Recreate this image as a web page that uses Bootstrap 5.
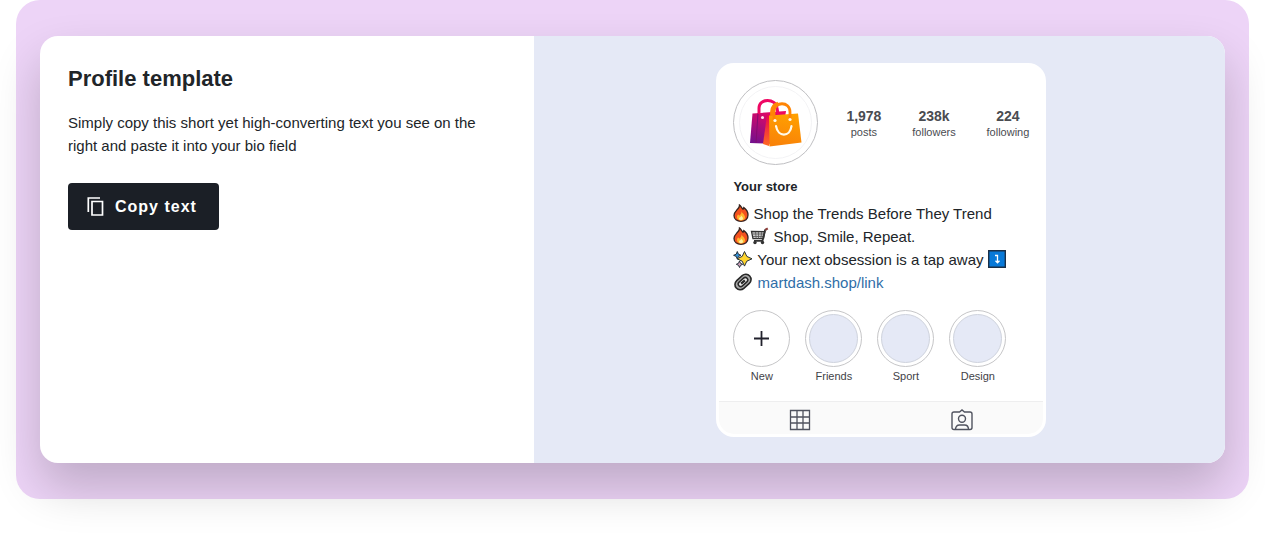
<!DOCTYPE html>
<html lang="en">
<head>
<meta charset="utf-8">
<meta name="viewport" content="width=device-width, initial-scale=1">
<title>Profile template</title>
<link href="https://cdn.jsdelivr.net/npm/bootstrap@5.3.0/dist/css/bootstrap.min.css" rel="stylesheet">
<style>
  body { font-family: "Liberation Sans", Arial, sans-serif; color: #212529; background: #fff; }
  .stage { background: #edd4f7; border-radius: 24px; padding: 36px 24px; }
  .panel { border-radius: 18px; background: #fff; box-shadow: 0 24px 48px rgba(0, 0, 0, .2); }
  .panel-left { padding: 29px 28px 28px; border-radius: 18px 0 0 18px; }
  .panel-right { background: #e5e9f6; padding: 27px 16px 26px 20px; border-radius: 0 18px 18px 0; }
  .panel-title { font-size: 22px; line-height: 28px; margin-bottom: 18px; }
  .copy-note, .bio { font-size: 15px; line-height: 23px; }
  .copy-note { margin-bottom: 26px; max-width: 424px; }
  .btn-copy { --bs-btn-color: #fff; --bs-btn-bg: #1b1f26; --bs-btn-hover-color: #fff; --bs-btn-hover-bg: #2b313b;
    --bs-btn-active-color: #fff; --bs-btn-active-bg: #101318; --bs-btn-border-width: 0; --bs-btn-border-radius: 4px;
    --bs-btn-font-weight: 700; --bs-btn-font-size: 16px; --bs-btn-line-height: 23px;
    --bs-btn-padding-x: 18px; --bs-btn-padding-y: 12px; letter-spacing: 1px; }
  .phone { width: 100%; max-width: 330px; border: 3px solid #fff; border-radius: 18px; background: #fff; overflow: hidden; }
  .phone-body { padding: 14px 14px 18px; }
  .avatar { width: 85px; height: 85px; border: 1px solid #bfbfc2; padding: 5px; flex: none; }
  .avatar-ring { border: 1px solid #f3f3f5; }
  .stats { margin-left: 28px; padding-top: 2px; color: #4a4c51; text-align: center; }
  .stat-value { font-size: 14px; line-height: 17px; }
  .stat-label { font-size: 11px; line-height: 15px; }
  .store-name { font-size: 13px; line-height: 18px; margin: 13px 0 6px; }
  .bio svg { vertical-align: -3px; }
  .bio a { color: #2f6ea8; }
  .highlights { gap: 15px; margin-top: 16px; }
  .highlight { width: 57px; font-size: 11px; line-height: 14px; color: #3f4247; text-align: center; }
  .bubble { width: 57px; height: 57px; border: 1px solid #c6c6c8; border-radius: 50%; padding: 3px; background: #fff; margin-bottom: 2px; }
  .bubble-fill { background: #e5e9f6; border: 1px solid #cfd3dd; }
  .tabs { background: #fafafa; border-top: 1px solid #eeeeef; border-radius: 0 0 14px 14px; }
  .tabs a { padding: 7px 0 3px; line-height: 0; color: #50535f; }
</style>
</head>
<body>
<svg class="d-none" aria-hidden="true">
  <symbol id="fire" viewBox="0 0 16 18">
    <path d="M6.500 1C8 2 8.500 4 10 5.200c.5-.4.7-1 .8-1.600C13.500 5.500 15 8 15 11c0 4-3 6.300-7 6.300S1 15 1 11.500C1 8.500 3 7 4.500 5.300 5.800 4 6.600 2.800 6.500 1z" fill="#f4511e" stroke="#35231f" stroke-width="1.300"/>
    <path d="M8.500 7c.3 2 3.500 3.500 3.500 6.300 0 2.200-1.700 3.200-4 3.200s-4-1.200-4-3.500c0-1.300.6-2.200 1.200-2.800.4.8.8 1.200 1.300 1.200C8 10.500 8.700 9 8.500 7z" fill="#ffb52e"/>
    <path d="M8.300 11.500c.2 1 1.700 1.500 1.700 3 0 1-.8 1.700-2 1.700s-2-.7-2-1.700c0-1 2.300-1.500 2.300-3z" fill="#fff0a0"/>
  </symbol>
</svg>
<main class="container-fluid px-3 min-vh-100">
  <section class="stage">
    <div class="panel row g-0">
      <div class="col-12 col-md-5 panel-left">
        <h1 class="panel-title fw-bold">Profile template</h1>
        <p class="copy-note">Simply copy this short yet high-converting text you see on the right and paste it into your bio field</p>
        <button type="button" class="btn btn-copy d-inline-flex align-items-center">
          <svg class="me-2" width="21" height="21" viewBox="0 0 21 21" fill="none" stroke="#fff" stroke-width="1.700" aria-hidden="true"><path d="M2.300 16V2H14M6 5.500h10.500v13.500H6z"/></svg>
          <span class="pe-1">Copy text</span>
        </button>
      </div>
      <div class="col-12 col-md-7 panel-right d-flex justify-content-center">
        <article class="phone">
          <div class="phone-body">
            <div class="d-flex align-items-center">
              <div class="avatar rounded-circle">
                <div class="avatar-ring rounded-circle w-100 h-100 d-flex align-items-center justify-content-center">
                  <svg width="52" height="48" viewBox="0 0 52 48" aria-label="Store logo">
                    <defs>
                      <linearGradient id="bagBack" x1=".7" y1="0" x2=".2" y2="1"><stop stop-color="#ed0860"/><stop offset="1" stop-color="#75108d"/></linearGradient>
                      <linearGradient id="bagFront" x1=".6" y1="0" x2=".4" y2="1"><stop stop-color="#ffa000"/><stop offset="1" stop-color="#f98208"/></linearGradient>
                      <linearGradient id="bagSide" x1="0" y1="0" x2="0" y2="1"><stop stop-color="#e80650"/><stop offset="1" stop-color="#ff6a22"/></linearGradient>
                    </defs>
                    <path d="M2.500 14.500 36 12l-5 33-31-1z" fill="url(#bagBack)"/>
                    <path d="m8 14-2 30" stroke="#830c70" stroke-width="1"/>
                    <path d="M9 15V9c0-10 17-10 18 0l1 6" fill="none" stroke="#ef0763" stroke-width="3"/>
                    <circle cx="12.500" cy="18.500" r="1.500" fill="#ffe1ec"/>
                    <path d="m17 16-4 29 6 2 8-30z" fill="url(#bagSide)"/>
                    <path d="m19 16.500 29-2 3.500 29-32 4z" fill="url(#bagFront)"/>
                    <path d="M24 21v-8c0-11 16-11 16 0v7M21.500 17v-4c0-6 3-8 6.500-9" fill="none" stroke="#ff8505" stroke-width="2.800"/>
                    <path d="M26 27c2 11.500 14 11.500 15.500 0" fill="none" stroke="#fff9e8" stroke-width="2.200" stroke-linecap="round"/>
                    <circle cx="25" cy="21.500" r="1.600" fill="#fff9e8"/><circle cx="40" cy="20.500" r="1.600" fill="#fff9e8"/>
                  </svg>
                </div>
              </div>
              <div class="stats d-flex justify-content-between flex-grow-1">
                <div><div class="stat-value fw-bold">1,978</div><div class="stat-label">posts</div></div>
                <div><div class="stat-value fw-bold">238k</div><div class="stat-label">followers</div></div>
                <div><div class="stat-value fw-bold">224</div><div class="stat-label">following</div></div>
              </div>
            </div>
            <h2 class="store-name fw-bold">Your store</h2>
            <div class="bio">
              <div><svg width="16" height="18"><use href="#fire"/></svg> Shop the Trends Before They Trend</div>
              <div><svg width="16" height="18"><use href="#fire"/></svg><svg width="20" height="18" viewBox="0 0 20 18" fill="none" aria-hidden="true"><path d="m2.500 4.500 13.500.2-1.500 7H4z" fill="#c9c9c9" stroke="#333" stroke-width="1.300"/><path d="M3.500 7h12M4 9.500h11M6.500 5l.7 6.500M9.500 5v6.500M12.700 5l-.8 6.500" stroke="#555" stroke-width=".8"/><path d="m18 2-2 1-2.500 10.800H5" stroke="#333" stroke-width="1.800"/><path d="m16.300 2.800 2.500-1.500" stroke="#8f3d39" stroke-width="2"/><circle cx="6" cy="15.500" r="1.700" fill="#333"/><circle cx="13.500" cy="15.500" r="1.700" fill="#333"/></svg> Shop, Smile, Repeat.</div>
              <div><svg width="20" height="18" viewBox="0 0 20 18" stroke="#26313b" stroke-width="1" aria-hidden="true"><path d="m11.500 1.500 2.300 4.900 5.200 2.400-5.200 2.400-2.300 4.900-2.300-4.900L4 8.800l5.200-2.400z" fill="#ffd52e"/><path d="m4.300 1.500 1.100 2.700L8 5.300 5.400 6.400 4.300 9.100 3.200 6.400.6 5.300l2.600-1.100z" fill="#3293dc"/><path d="m6.500 11 1 2.300 2.200 1-2.200 1-1 2.200-1-2.200-2.200-1 2.200-1z" fill="#d4a4bd"/></svg> Your next obsession is a tap away <svg width="18" height="18" viewBox="0 0 18 18" fill="none" aria-hidden="true"><path d="M.7.700h16.600v16.600H.7z" fill="#0879d8" stroke="#1b3048" stroke-width="1.400"/><path d="M7 5.500h2.500v7M7.500 10.800l2 2 2-2" stroke="#fff" stroke-width="1.300"/></svg></div>
              <div><svg width="20" height="18" viewBox="0 0 20 18" fill="none" aria-hidden="true"><g transform="rotate(-42 10 9)"><rect x="1" y="3.700" width="18" height="10.600" rx="5.300" fill="#aaa" stroke="#292929" stroke-width="1.600"/><rect x="4.500" y="6.500" width="11" height="5" rx="2.500" fill="#eee" stroke="#292929" stroke-width="1.500"/><path d="M7.500 9h5" stroke="#292929" stroke-width="2.200"/></g></svg> <a href="#" class="text-decoration-none">martdash.shop/link</a></div>
            </div>
            <div class="highlights d-flex">
              <div class="highlight"><div class="bubble d-flex align-items-center justify-content-center"><svg width="15" height="15" viewBox="0 0 15 15" stroke="#21212c" stroke-width="1.800" aria-hidden="true"><path d="M7.500 0v15M0 7.500h15"/></svg></div>New</div>
              <div class="highlight"><div class="bubble"><div class="bubble-fill rounded-circle w-100 h-100"></div></div>Friends</div>
              <div class="highlight"><div class="bubble"><div class="bubble-fill rounded-circle w-100 h-100"></div></div>Sport</div>
              <div class="highlight"><div class="bubble"><div class="bubble-fill rounded-circle w-100 h-100"></div></div>Design</div>
            </div>
          </div>
          <nav class="tabs d-flex" aria-label="Profile views">
            <a href="#" class="flex-fill text-center" aria-label="Grid"><svg width="22" height="22" viewBox="0 0 22 22" fill="none" stroke="currentColor" stroke-width="1.300"><path d="M1.500 1.500h19v19h-19zM8 1.500v19M14 1.500v19M1.500 8h19M1.500 14h19"/></svg></a>
            <a href="#" class="flex-fill text-center" aria-label="Tagged"><svg width="22" height="22" viewBox="0 0 22 22" fill="none" stroke="currentColor" stroke-width="1.400"><path d="M3 3h5.500L11 1l2.500 2H19q2 0 2 2v13.500q0 2-2 2H3q-2 0-2-2V5q0-2 2-2z"/><circle cx="11" cy="9.800" r="3.500"/><path d="M4.500 20.500c0-3 1.500-4.500 4-4.500h5c2.500 0 4 1.500 4 4.500"/></svg></a>
          </nav>
        </article>
      </div>
    </div>
  </section>
</main>
<script src="https://cdn.jsdelivr.net/npm/bootstrap@5.3.0/dist/js/bootstrap.bundle.min.js"></script>
</body>
</html>
